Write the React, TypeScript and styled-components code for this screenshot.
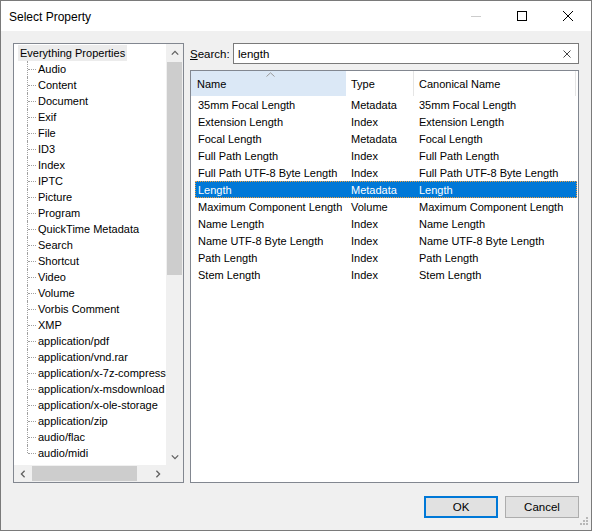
import React from "react";
import styled, { createGlobalStyle, css } from "styled-components";

const GlobalStyle = createGlobalStyle`
  html, body {
    margin: 0;
    padding: 0;
    background: #ffffff;
  }
  body {
    font-family: "Liberation Sans", Arial, sans-serif;
    font-size: 11px;
    color: #000000;
  }
  * {
    box-sizing: border-box;
  }
`;

const treeItems = [
    "Audio", "Content", "Document", "Exif", "File", "ID3", "Index", "IPTC",
    "Picture", "Program", "QuickTime Metadata", "Search", "Shortcut", "Video",
    "Volume", "Vorbis Comment", "XMP", "application/pdf", "application/vnd.rar",
    "application/x-7z-compressed", "application/x-msdownload",
    "application/x-ole-storage", "application/zip", "audio/flac", "audio/midi",
];

interface Property {
    name: string,
    type: string,
    canonical: string,
}

const properties: Property[] = [
    {name: "35mm Focal Length", type: "Metadata", canonical: "35mm Focal Length"},
    {name: "Extension Length", type: "Index", canonical: "Extension Length"},
    {name: "Focal Length", type: "Metadata", canonical: "Focal Length"},
    {name: "Full Path Length", type: "Index", canonical: "Full Path Length"},
    {name: "Full Path UTF-8 Byte Length", type: "Index", canonical: "Full Path UTF-8 Byte Length"},
    {name: "Length", type: "Metadata", canonical: "Length"},
    {name: "Maximum Component Length", type: "Volume", canonical: "Maximum Component Length"},
    {name: "Name Length", type: "Index", canonical: "Name Length"},
    {name: "Name UTF-8 Byte Length", type: "Index", canonical: "Name UTF-8 Byte Length"},
    {name: "Path Length", type: "Index", canonical: "Path Length"},
    {name: "Stem Length", type: "Index", canonical: "Stem Length"},
];

const SELECTED = "Length";

type Dir = "up" | "down" | "left" | "right";

const Chevron: React.FC<{dir: Dir}> = ({dir}) => {
    const rot = {up: 0, right: 90, down: 180, left: 270}[dir];
    return (
        <svg width="8" height="8" viewBox="0 0 8 8" style={{transform: `rotate(${rot}deg)`}}>
            <path d="M0.8 5.6 L4 2.4 L7.2 5.6" fill="none" stroke="#606060" strokeWidth="1.3"/>
        </svg>
    );
};

export default function App() {
    return (
        <>
            <GlobalStyle/>
            <Window>
                <TitleBar>
                    <Title>Select Property</Title>
                    <CaptionButton>
                        <svg width="10" height="10" viewBox="0 0 10 10">
                            <line x1="0" y1="5.5" x2="10" y2="5.5" stroke="#cccccc" strokeWidth="1"/>
                        </svg>
                    </CaptionButton>
                    <CaptionButton>
                        <svg width="10" height="10" viewBox="0 0 10 10">
                            <rect x="0.5" y="0.5" width="9" height="9" fill="none" stroke="#000" strokeWidth="1"/>
                        </svg>
                    </CaptionButton>
                    <CaptionButton>
                        <svg width="10" height="10" viewBox="0 0 10 10">
                            <path d="M0 0 L10 10 M10 0 L0 10" stroke="#000" strokeWidth="1"/>
                        </svg>
                    </CaptionButton>
                </TitleBar>
                <Body>
                    <Main>
                        <TreePanel>
                            <TreeContent>
                                <RootItem>Everything Properties</RootItem>
                                <ChildList>
                                    {treeItems.map((item, i) => (
                                        <ChildItem key={item} isLast={i === treeItems.length - 1}>
                                            <span>{item}</span>
                                        </ChildItem>
                                    ))}
                                </ChildList>
                            </TreeContent>
                            <VScroll>
                                <ArrowBox><Chevron dir="up"/></ArrowBox>
                                <VTrack>
                                    <VThumb/>
                                </VTrack>
                                <ArrowBox><Chevron dir="down"/></ArrowBox>
                            </VScroll>
                            <HScroll>
                                <ArrowBox><Chevron dir="left"/></ArrowBox>
                                <HTrack>
                                    <HThumb/>
                                </HTrack>
                                <ArrowBox><Chevron dir="right"/></ArrowBox>
                            </HScroll>
                            <Corner/>
                        </TreePanel>
                        <RightColumn>
                            <SearchRow>
                                <SearchLabel><u>S</u>earch:</SearchLabel>
                                <SearchBox>
                                    <SearchText>length</SearchText>
                                    <ClearButton>
                                        <svg width="8" height="8" viewBox="0 0 8 8">
                                            <path d="M0.5 0.5 L7.5 7.5 M7.5 0.5 L0.5 7.5" stroke="#444" strokeWidth="1"/>
                                        </svg>
                                    </ClearButton>
                                </SearchBox>
                            </SearchRow>
                            <ListView>
                                <HeaderRow>
                                    <HeaderCell width={156} pad={6} sorted>
                                        <SortArrow>
                                            <svg width="9" height="5" viewBox="0 0 9 5">
                                                <path d="M0.5 4.5 L4.5 0.8 L8.5 4.5" fill="none" stroke="#9a9a9a" strokeWidth="1"/>
                                            </svg>
                                        </SortArrow>
                                        Name
                                    </HeaderCell>
                                    <HeaderCell width={67} pad={4}>Type</HeaderCell>
                                    <HeaderCell width={162} pad={5}>Canonical Name</HeaderCell>
                                </HeaderRow>
                                <Rows>
                                    {properties.map(p => (
                                        <Row key={p.name} selected={p.name === SELECTED}>
                                            <Cell width={152} pad={3}>{p.name}</Cell>
                                            <Cell width={67} pad={4}>{p.type}</Cell>
                                            <Cell width={162} pad={5}>{p.canonical}</Cell>
                                        </Row>
                                    ))}
                                </Rows>
                            </ListView>
                        </RightColumn>
                    </Main>
                    <Footer>
                        <DialogButton isDefault>OK</DialogButton>
                        <DialogButton>Cancel</DialogButton>
                    </Footer>
                </Body>
                <Grip>
                    <svg width="12" height="12" viewBox="0 0 12 12">
                        {[[9, 1], [6, 4], [9, 4], [3, 7], [6, 7], [9, 7]].map(([x, y]) => (
                            <rect key={`${x}-${y}`} x={x} y={y} width="2" height="2" fill="#b8b8b8"/>
                        ))}
                    </svg>
                </Grip>
            </Window>
        </>
    );
}

const Window = styled.div`
    position: relative;
    width: 592px;
    height: 531px;
    border: 1px solid #7a7a7a;
    background: #f0f0f0;
    display: flex;
    flex-direction: column;
`;

const TitleBar = styled.div`
    height: 30px;
    background: #ffffff;
    display: flex;
    align-items: center;
    flex-shrink: 0;
`;

const Title = styled.div`
    flex: 1;
    padding-left: 8px;
    padding-top: 1px;
    font-size: 12px;
    color: #000;
`;

const CaptionButton = styled.div`
    width: 46px;
    height: 30px;
    display: flex;
    align-items: center;
    justify-content: center;
`;

const Body = styled.div`
    flex: 1;
    padding: 12px 12px 0 12px;
    display: flex;
    flex-direction: column;
`;

const Main = styled.div`
    display: grid;
    grid-template-columns: 171px 1fr;
    column-gap: 6px;
    height: 440px;
`;

const TreePanel = styled.div`
    border: 1px solid #828790;
    background: #ffffff;
    display: grid;
    grid-template-columns: 1fr 17px;
    grid-template-rows: 1fr 17px;
    overflow: hidden;
`;

const TreeContent = styled.div`
    padding-top: 1px;
    overflow: hidden;
    white-space: nowrap;
`;

const RootItem = styled.div`
    display: inline-block;
    height: 16px;
    line-height: 17px;
    margin-left: 4px;
    padding: 0 2px;
    background: #ececec;
`;

const ChildList = styled.div`
    margin-left: 13px;
`;

const ChildItem = styled.div<{isLast: boolean}>`
    position: relative;
    height: 16px;
    line-height: 17px;
    padding-left: 11px;
    &::before {
        content: "";
        position: absolute;
        left: 0;
        top: 0;
        height: ${props => props.isLast ? "8px" : "16px"};
        border-left: 1px dotted #a0a0a0;
    }
    &::after {
        content: "";
        position: absolute;
        left: 1px;
        top: 8px;
        width: 8px;
        border-top: 1px dotted #a0a0a0;
    }
`;

const ArrowBox = styled.div`
    width: 17px;
    height: 17px;
    flex-shrink: 0;
    display: flex;
    align-items: center;
    justify-content: center;
`;

const VScroll = styled.div`
    background: #f0f0f0;
    display: flex;
    flex-direction: column;
`;

const VTrack = styled.div`
    flex: 1;
    padding: 1px 1px 0 1px;
`;

const VThumb = styled.div`
    height: 213px;
    background: #cdcdcd;
`;

const HScroll = styled.div`
    background: #f0f0f0;
    display: flex;
`;

const HTrack = styled.div`
    flex: 1;
    padding: 1px 0 1px 1px;
`;

const HThumb = styled.div`
    width: 105px;
    height: 100%;
    background: #cdcdcd;
`;

const Corner = styled.div`
    background: #f0f0f0;
`;

const RightColumn = styled.div`
    display: flex;
    flex-direction: column;
    gap: 6px;
    min-width: 0;
`;

const SearchRow = styled.div`
    display: flex;
    align-items: center;
    height: 21px;
    font-size: 11.5px;
`;

const SearchLabel = styled.div`
    width: 43px;
    flex-shrink: 0;
    padding-top: 1px;
    u {
        text-decoration: underline;
    }
`;

const SearchBox = styled.div`
    flex: 1;
    height: 21px;
    border: 1px solid #7a7a7a;
    background: #ffffff;
    display: flex;
    align-items: center;
    padding-left: 4px;
    padding-top: 1px;
`;

const SearchText = styled.div`
    flex: 1;
`;

const ClearButton = styled.div`
    width: 20px;
    height: 19px;
    display: flex;
    align-items: center;
    justify-content: center;
    padding-right: 3px;
`;

const ListView = styled.div`
    flex: 1;
    border: 1px solid #828790;
    background: #ffffff;
    overflow: hidden;
`;

const HeaderRow = styled.div`
    display: flex;
    height: 25px;
`;

const HeaderCell = styled.div<{width: number, pad: number, sorted?: boolean}>`
    position: relative;
    width: ${props => props.width}px;
    flex-shrink: 0;
    padding-left: ${props => props.pad}px;
    border-right: 1px solid #e5e5e5;
    line-height: 27px;
    color: #000;
    ${props => props.sorted && css`
        background: #dbe8f6;
        border-right-color: #ffffff;
    `}
`;

const SortArrow = styled.div`
    position: absolute;
    top: 0;
    left: 0;
    right: 0;
    display: flex;
    justify-content: center;
    line-height: 0;
    padding-top: 1px;
    svg {
        margin-left: 4px;
    }
`;

const Rows = styled.div`
    padding-top: 0;
`;

const Row = styled.div<{selected: boolean}>`
    display: flex;
    height: 17px;
    line-height: 18px;
    margin-left: 4px;
    width: 382px;
    white-space: nowrap;
    ${props => props.selected && css`
        background: #0078d7;
        color: #ffffff;
        outline: 1px dotted #f0a040;
        outline-offset: -1px;
    `}
`;

const Cell = styled.div<{width: number, pad: number}>`
    width: ${props => props.width}px;
    flex-shrink: 0;
    padding-left: ${props => props.pad}px;
    overflow: hidden;
`;

const Footer = styled.div`
    display: flex;
    justify-content: flex-end;
    gap: 7px;
    margin-top: 13px;
`;

const DialogButton = styled.div<{isDefault?: boolean}>`
    width: 74px;
    height: 22px;
    background: #e1e1e1;
    border: ${props => props.isDefault ? "2px solid #0078d7" : "1px solid #adadad"};
    display: flex;
    align-items: center;
    justify-content: center;
    color: #000;
    font-size: 11.5px;
`;

const Grip = styled.div`
    position: absolute;
    right: 2px;
    bottom: 2px;
    line-height: 0;
`;
